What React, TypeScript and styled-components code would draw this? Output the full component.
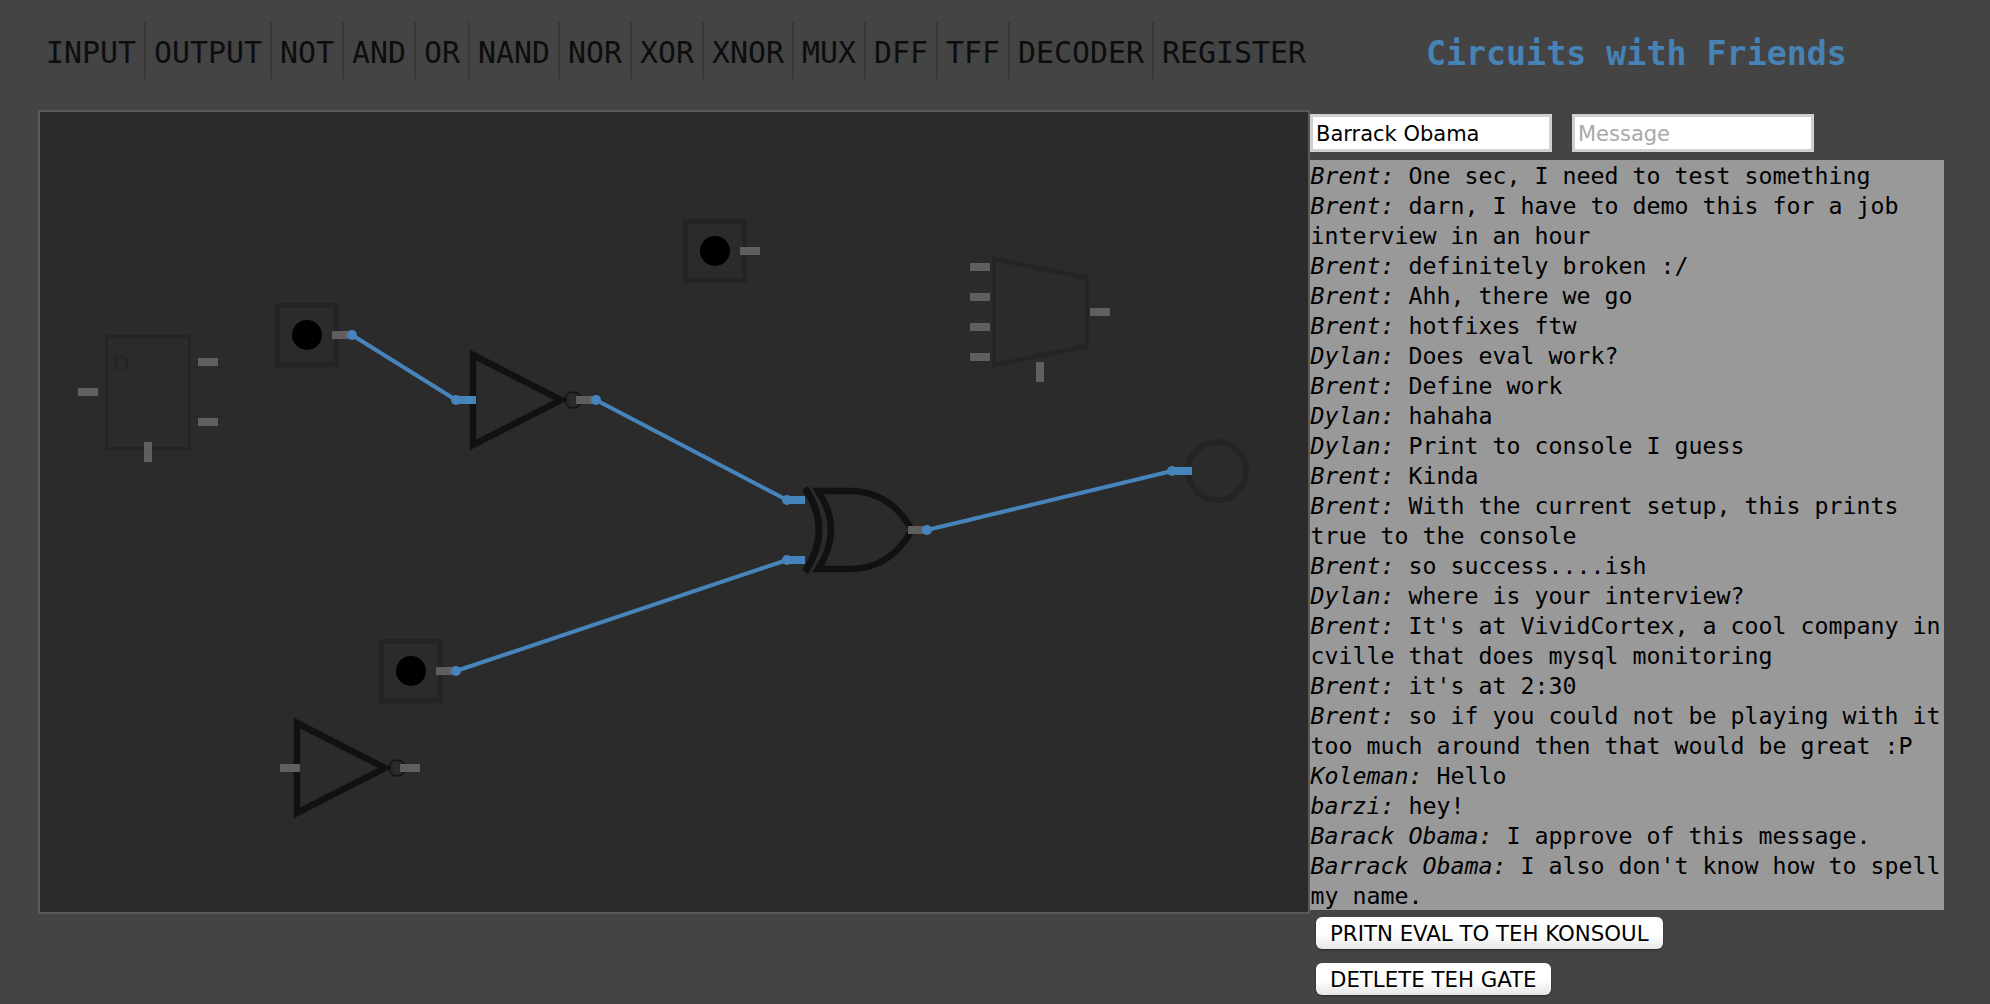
import React from "react";
import styled, { createGlobalStyle } from "styled-components";

const GlobalStyle = createGlobalStyle`
  html, body {
    margin: 0;
    padding: 0;
    background: #444444;
  }
`;

const Page = styled.div`
  width: 1990px;
  height: 1004px;
  overflow: hidden;
  padding: 22px 0 0 38px;
  box-sizing: border-box;
  font-family: "DejaVu Sans Mono", monospace;
`;

const Header = styled.header`
  display: flex;
  align-items: center;
  height: 57px;
`;

const Toolbar = styled.nav`
  display: flex;
  height: 100%;
`;

const ToolItem = styled.a`
  padding: 4px 8px 0;
  line-height: 53px;
  font-size: 29.9px;
  color: #0d0d0d;
  border-right: 2px solid #383838;
  &:last-child {
    border-right: none;
  }
`;

const Title = styled.h1`
  margin: 6px 0 0 112px;
  font-size: 33.3px;
  font-weight: bold;
  color: #4682b4;
  white-space: nowrap;
`;

const Main = styled.main`
  display: flex;
  align-items: flex-start;
  margin-top: 31px;
`;

const Canvas = styled.div`
  width: 1268px;
  height: 800px;
  border: 2px solid #5a5a5a;
  background: #2b2b2b;
  flex: none;
`;

const Board = styled.svg`
  display: block;
  width: 100%;
  height: 100%;
`;

const Side = styled.aside`
  width: 634px;
  padding-top: 4px;
`;

const InputRow = styled.div`
  display: flex;
  gap: 20px;
`;

const Field = styled.input`
  width: 242px;
  height: 38px;
  box-sizing: border-box;
  border: 3px solid #cfcfcf;
  outline: none;
  background: #fff;
  padding: 2px 3px 0;
  font-family: "DejaVu Sans", sans-serif;
  font-size: 21px;
  color: #000;
  &::placeholder {
    color: #a9a9a9;
  }
`;

const Chat = styled.div`
  margin-top: 8px;
  width: 634px;
  height: 750px;
  box-sizing: border-box;
  padding: 1px 0 0 0.5px;
  background: #999999;
  font-size: 23.25px;
  line-height: 30px;
  color: #000;
  overflow: hidden;
`;

const Author = styled.em`
  font-style: italic;
`;

const Actions = styled.div`
  display: flex;
  flex-direction: column;
  align-items: flex-start;
  gap: 14px;
  margin: 7px 0 0 6px;
`;

const ActionButton = styled.button`
  height: 32px;
  padding: 0 14px;
  border: none;
  border-radius: 6px;
  background: linear-gradient(#ffffff 55%, #e6e6e6);
  box-shadow: 0 1px 2px rgba(0, 0, 0, 0.4);
  font-family: "DejaVu Sans", sans-serif;
  font-size: 21.3px;
  color: #000;
`;

const PinBar = styled.rect<{ $live?: boolean }>`
  fill: ${(p) => (p.$live ? "#4684bb" : "#5f5f5f")};
`;

const Wire = styled.line`
  stroke: #4684bb;
  stroke-width: 4;
`;

const WireDot = styled.circle`
  fill: #4684bb;
`;

const DimOutline = styled.g`
  fill: none;
  stroke: #242424;
`;

const DarkOutline = styled.g`
  fill: none;
  stroke: #111111;
`;

const FlopLabel = styled.text`
  font-family: "Liberation Sans", sans-serif;
  font-size: 22px;
  fill: #242424;
`;

type PinProps = { x: number; y: number; live?: boolean };

// pins are 20x8, the vertical ones are the clock/select inputs
const HPin = ({ x, y, live }: PinProps) => (
  <PinBar x={x} y={y} width={20} height={8} $live={live} />
);
const VPin = ({ x, y }: PinProps) => <PinBar x={x} y={y} width={8} height={20} />;

const InputNode = ({ x, y }: { x: number; y: number }) => (
  <g transform={`translate(${x} ${y})`}>
    <DimOutline>
      <rect x={-29.5} y={-29.5} width={59} height={59} strokeWidth={5} />
    </DimOutline>
    <circle r={15} fill="#000" />
    <HPin x={25} y={-4} />
  </g>
);

const NotGate = ({ x, y, live }: { x: number; y: number; live?: boolean }) => (
  <g transform={`translate(${x} ${y})`}>
    <DarkOutline>
      <path d="M3 -45 L91 0 L3 45 Z" strokeWidth={6.5} />
      <circle cx={103} cy={0} r={8} strokeWidth={1.5} />
    </DarkOutline>
    <HPin x={-14} y={-4} live={live} />
    <HPin x={106} y={-4} />
  </g>
);

const Circuit = () => (
  <Board viewBox="40 112 1268 800">
    <Wire x1={352} y1={335} x2={456} y2={400} />
    <Wire x1={596} y1={400} x2={787} y2={500} />
    <Wire x1={456} y1={671} x2={787} y2={560} />
    <Wire x1={927} y1={530} x2={1172} y2={471} />

    {/* d flip flop */}
    <DimOutline>
      <rect x={106.5} y={336.5} width={83} height={112} strokeWidth={3} />
    </DimOutline>
    <FlopLabel x={113} y={371}>
      D
    </FlopLabel>
    <HPin x={78} y={388} />
    <HPin x={198} y={358} />
    <HPin x={198} y={418} />
    <VPin x={144} y={442} />

    <InputNode x={307} y={335} />
    <InputNode x={715} y={251} />
    <InputNode x={411} y={671} />

    <NotGate x={470} y={400} live />
    <NotGate x={294} y={768} />

    {/* mux */}
    <DimOutline>
      <path d="M994 259 L1087 278 L1087 346 L994 365 Z" strokeWidth={4} />
    </DimOutline>
    <HPin x={970} y={263} />
    <HPin x={970} y={293} />
    <HPin x={970} y={323} />
    <HPin x={970} y={353} />
    <HPin x={1090} y={308} />
    <VPin x={1036} y={362} />

    {/* xor */}
    <DarkOutline>
      <path d="M805 488 Q833 530 805 572" strokeWidth={7} />
      <path
        d="M818 491 L850 491 Q890 491 912 530 Q890 569 850 569 L818 569 Q844 530 818 491 Z"
        strokeWidth={6.5}
      />
    </DarkOutline>
    <HPin x={785} y={496} live />
    <HPin x={785} y={556} live />
    <HPin x={908} y={526} />

    {/* output */}
    <DimOutline>
      <circle cx={1217} cy={471} r={29} strokeWidth={6} />
    </DimOutline>
    <PinBar x={1172} y={467} width={20} height={8} $live />

    <WireDot cx={352} cy={335} r={5} />
    <WireDot cx={456} cy={400} r={5} />
    <WireDot cx={596} cy={400} r={5} />
    <WireDot cx={787} cy={500} r={5} />
    <WireDot cx={787} cy={560} r={5} />
    <WireDot cx={456} cy={671} r={5} />
    <WireDot cx={927} cy={530} r={5} />
    <WireDot cx={1172} cy={471} r={5} />
  </Board>
);

const tools = [
  "INPUT",
  "OUTPUT",
  "NOT",
  "AND",
  "OR",
  "NAND",
  "NOR",
  "XOR",
  "XNOR",
  "MUX",
  "DFF",
  "TFF",
  "DECODER",
  "REGISTER",
];

const messages: [string, string][] = [
  ["Brent", "One sec, I need to test something"],
  ["Brent", "darn, I have to demo this for a job interview in an hour"],
  ["Brent", "definitely broken :/"],
  ["Brent", "Ahh, there we go"],
  ["Brent", "hotfixes ftw"],
  ["Dylan", "Does eval work?"],
  ["Brent", "Define work"],
  ["Dylan", "hahaha"],
  ["Dylan", "Print to console I guess"],
  ["Brent", "Kinda"],
  ["Brent", "With the current setup, this prints true to the console"],
  ["Brent", "so success....ish"],
  ["Dylan", "where is your interview?"],
  ["Brent", "It's at VividCortex, a cool company in cville that does mysql monitoring"],
  ["Brent", "it's at 2:30"],
  ["Brent", "so if you could not be playing with it too much around then that would be great :P"],
  ["Koleman", "Hello"],
  ["barzi", "hey!"],
  ["Barack Obama", "I approve of this message."],
  ["Barrack Obama", "I also don't know how to spell my name."],
];

const App: React.FC = () => (
  <Page>
    <GlobalStyle />
    <Header>
      <Toolbar>
        {tools.map((t) => (
          <ToolItem key={t}>{t}</ToolItem>
        ))}
      </Toolbar>
      <Title>Circuits with Friends</Title>
    </Header>
    <Main>
      <Canvas>
        <Circuit />
      </Canvas>
      <Side>
        <InputRow>
          <Field defaultValue="Barrack Obama" />
          <Field placeholder="Message" />
        </InputRow>
        <Chat>
          {messages.map(([who, text], i) => (
            <div key={i}>
              <Author>{who}:</Author> {text}
            </div>
          ))}
        </Chat>
        <Actions>
          <ActionButton>PRITN EVAL TO TEH KONSOUL</ActionButton>
          <ActionButton>DETLETE TEH GATE</ActionButton>
        </Actions>
      </Side>
    </Main>
  </Page>
);

export default App;
